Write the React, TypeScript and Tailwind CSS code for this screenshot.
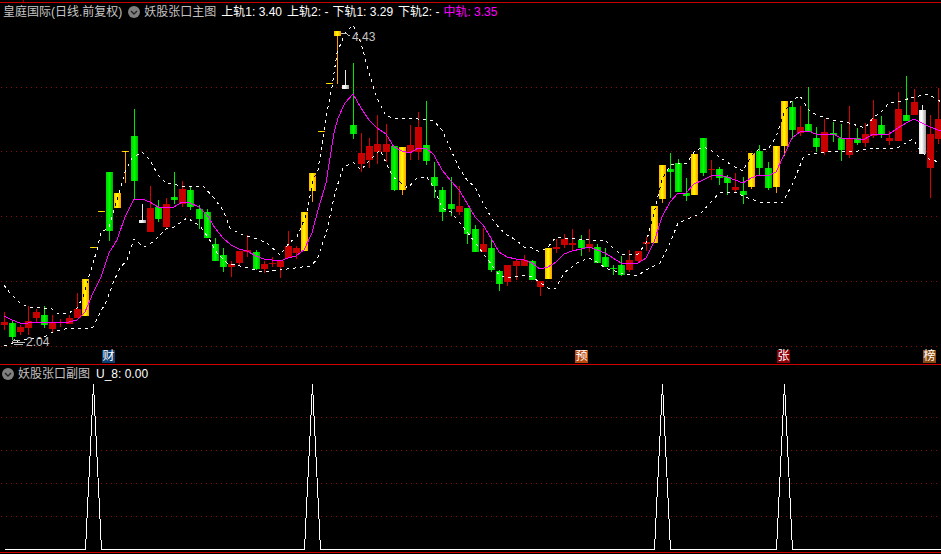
import React from "react";

type Kind = "g" | "r" | "y" | "w";
type Candle = [number, Kind, number, number, number, number];

const candles: Candle[] = [
  [4, "r", 312, 322, 325, 330], [12, "g", 320, 323, 337, 340], [20, "r", 325, 327, 332, 335], [28, "r", 306, 321, 328, 335],
  [36, "r", 309, 312, 318, 322], [44, "g", 306, 315, 325, 328], [52, "r", 315, 323, 329, 333], [60, "r", 319, 322, 323, 327],
  [69, "r", 315, 318, 324, 324], [77, "r", 293, 309, 318, 318], [85, "y", 279, 279, 316, 316], [93, "y", 247, 247, 248, 248],
  [101, "y", 211, 211, 212, 212], [109, "g", 172, 172, 231, 241], [117, "y", 193, 193, 208, 208], [125, "y", 151, 151, 152, 183],
  [134, "g", 109, 136, 181, 200], [142, "w", 204, 220, 223, 223], [150, "r", 186, 208, 232, 232], [158, "g", 200, 207, 219, 222],
  [166, "r", 198, 204, 227, 229], [174, "g", 172, 197, 200, 204], [182, "r", 181, 189, 204, 207], [190, "g", 186, 190, 207, 210],
  [199, "g", 205, 209, 219, 229], [207, "g", 209, 212, 238, 238], [215, "g", 238, 244, 261, 261], [223, "g", 248, 255, 267, 272],
  [231, "r", 261, 264, 267, 277], [239, "r", 251, 251, 263, 265], [247, "r", 235, 250, 252, 257], [256, "g", 250, 252, 269, 270],
  [264, "r", 261, 264, 269, 273], [272, "r", 257, 263, 264, 267], [280, "r", 260, 261, 267, 278], [288, "r", 231, 246, 258, 258],
  [296, "r", 246, 248, 253, 259], [304, "y", 212, 212, 251, 251], [312, "y", 173, 173, 191, 202], [321, "y", 131, 131, 132, 132],
  [329, "y", 83, 83, 84, 84], [337, "y", 31, 31, 36, 84], [345, "w", 70, 85, 89, 89], [353, "g", 63, 125, 134, 139],
  [361, "r", 133, 153, 164, 172], [369, "r", 138, 146, 160, 168], [377, "r", 115, 144, 152, 164], [386, "r", 124, 144, 152, 162],
  [394, "g", 146, 146, 190, 191], [402, "y", 147, 147, 190, 195], [410, "r", 125, 145, 152, 160], [418, "r", 112, 127, 152, 160],
  [426, "g", 101, 145, 161, 165], [434, "g", 162, 177, 186, 198], [442, "g", 187, 190, 212, 221], [451, "g", 177, 204, 209, 216],
  [459, "r", 186, 206, 212, 215], [467, "g", 208, 208, 234, 244], [475, "g", 225, 229, 252, 252], [483, "r", 228, 244, 252, 252],
  [491, "g", 239, 248, 270, 272], [499, "g", 270, 271, 284, 291], [507, "r", 265, 265, 282, 286], [516, "r", 260, 261, 266, 280],
  [524, "r", 255, 260, 266, 266], [532, "g", 260, 261, 280, 280], [540, "r", 281, 281, 287, 296], [548, "y", 248, 248, 279, 279],
  [556, "r", 239, 247, 249, 253], [564, "r", 234, 239, 245, 248], [572, "r", 229, 243, 245, 250], [581, "g", 235, 240, 248, 256],
  [589, "r", 229, 244, 248, 252], [597, "g", 244, 247, 263, 263], [605, "g", 248, 257, 267, 267], [613, "g", 265, 268, 269, 275],
  [621, "g", 256, 265, 275, 276], [629, "r", 250, 260, 270, 272], [638, "r", 251, 251, 261, 263], [646, "r", 237, 242, 244, 251],
  [654, "y", 206, 206, 243, 243], [662, "y", 165, 165, 199, 203], [670, "g", 153, 169, 172, 198], [678, "g", 159, 163, 192, 192],
  [686, "g", 178, 193, 196, 201], [694, "y", 154, 154, 195, 195], [703, "g", 138, 138, 173, 176], [711, "r", 160, 169, 170, 180],
  [719, "g", 167, 169, 178, 185], [727, "g", 175, 177, 183, 195], [735, "r", 173, 187, 190, 192], [743, "g", 177, 191, 195, 204],
  [751, "y", 153, 153, 187, 189], [759, "g", 145, 151, 168, 175], [768, "g", 162, 168, 188, 190], [776, "y", 146, 146, 187, 193],
  [784, "y", 101, 101, 146, 156], [792, "g", 101, 107, 130, 139], [800, "r", 106, 127, 133, 136], [808, "g", 87, 124, 132, 132],
  [816, "g", 127, 138, 147, 152], [824, "r", 119, 132, 152, 155], [833, "g", 122, 133, 135, 142], [841, "g", 124, 138, 150, 161],
  [849, "r", 106, 138, 155, 158], [857, "g", 128, 138, 143, 145], [865, "r", 123, 134, 143, 147], [873, "r", 100, 119, 136, 138],
  [881, "g", 116, 125, 134, 138], [889, "r", 131, 138, 141, 145], [898, "r", 92, 109, 141, 141], [906, "g", 76, 115, 121, 121],
  [914, "r", 89, 102, 115, 115], [922, "w", 105, 110, 154, 154], [930, "r", 115, 134, 168, 198], [938, "r", 88, 119, 139, 144],
];

const mid =
  "4,316 12,320 20,323 28,323 52,322 69,322 77,320 85,312 93,293 101,277 109,253 117,240 125,217 134,199 142,199 150,202 158,207 166,207 174,207 182,202 190,203 199,207 207,215 215,228 223,238 231,245 239,249 247,251 256,256 264,259 272,260 280,261 288,258 296,256 304,250 312,233 318,210 326,183 334,133 338,118 345,103 353,94 361,108 369,120 377,128 386,134 394,147 402,151 410,153 418,148 426,148 434,155 442,170 451,181 459,190 467,203 475,217 483,225 491,238 499,252 507,257 516,259 524,260 532,263 540,269 548,267 556,262 564,254 572,251 581,249 589,247 597,250 605,253 613,258 621,263 629,264 638,263 646,258 654,242 662,217 670,202 678,193 686,193 694,184 703,180 711,176 719,175 727,177 735,180 743,183 751,178 759,175 768,176 776,172 784,155 792,138 800,132 808,131 816,134 824,134 833,134 841,138 849,138 857,139 865,139 873,134 881,134 889,134 898,128 906,123 914,119 922,123 930,127 941,131";
const upper =
  "4,285 10,293 20,303 28,307 43,308 52,309 58,314 69,313 77,308 83,297 90,273 97,250 101,233 109,227 117,200 125,172 132,158 142,152 150,160 158,175 166,183 182,186 203,186 213,197 223,210 230,228 240,234 257,239 267,243 280,255 290,242 297,237 307,213 313,180 318,170 326,117 332,87 337,53 345,33 353,25 361,43 369,73 377,98 386,116 394,118 418,119 434,121 442,130 451,150 459,168 467,180 475,187 483,203 491,217 499,228 507,235 516,240 524,247 532,248 540,252 548,247 556,237 564,238 589,240 605,240 613,248 621,254 638,254 646,243 653,217 662,180 670,165 678,163 686,164 694,152 703,147 711,150 719,157 727,162 735,167 743,171 751,156 759,149 768,149 776,137 784,113 792,100 800,96 808,109 816,115 833,120 849,123 865,128 873,118 881,112 889,103 898,102 914,97 928,94 941,102";
const lower =
  "4,346 13,343 20,340 43,338 53,332 69,328 83,329 93,327 100,313 107,300 113,283 120,268 127,260 134,239 144,247 153,242 166,229 174,227 187,218 199,225 208,237 217,253 227,263 240,266 263,272 280,270 287,269 310,266 317,260 327,230 335,193 343,168 353,162 361,170 370,160 380,150 393,177 408,188 417,178 427,177 435,190 442,208 451,212 467,232 483,253 499,275 507,278 523,275 532,277 548,288 556,288 564,273 577,263 589,258 597,262 605,268 621,273 637,276 646,270 660,263 670,243 678,223 700,214 710,203 719,193 735,192 745,197 760,202 768,203 783,202 793,183 803,158 810,154 833,151 853,152 873,148 897,148 913,139 920,150 930,160 941,162";

const spikes = [93, 312, 662, 784];
const subLine = [
  "4,549",
  ...spikes.flatMap((x) => [`${x - 8},549`, `${x},384`, `${x + 8},549`]),
  "941,549",
].join(" ");

const fills: Record<Kind, string> = { g: "url(#gr)", r: "#c80000", y: "url(#ye)", w: "url(#wh)" };
const wicks: Record<Kind, string> = { g: "#00e800", r: "#d80000", y: "#ff9a00", w: "#e8e8e8" };

const badges = [
  { x: 102, t: "财", c: "#0f3f70" },
  { x: 575, t: "预", c: "#b84a10" },
  { x: 777, t: "张", c: "#8a0008" },
  { x: 923, t: "榜", c: "#8a4a10" },
];

function Toggle() {
  return (
    <svg width="12" height="12" viewBox="0 0 12 12" className="shrink-0">
      <circle cx="6" cy="6" r="6" fill="#808080" />
      <path d="M3 5l3 3 3-3" fill="none" stroke="#222" strokeWidth="1.4" />
    </svg>
  );
}

function Grid({ ys }: { ys: number[] }) {
  return (
    <>
      {ys.map((y) => (
        <line key={y} x1="1" x2="941" y1={y + 0.5} y2={y + 0.5} stroke="#8a0c0c" strokeDasharray="1 4" />
      ))}
    </>
  );
}

export default function App() {
  return (
    <div className="w-[941px] h-[554px] bg-black flex flex-col overflow-hidden text-[12px] leading-[14px] font-['Liberation_Sans','Noto_Sans_CJK_SC',sans-serif]">
      <div className="h-[2px] shrink-0 relative">
        <div className="absolute left-[23px] top-0 w-px h-[2px] bg-[#a00000]" />
      </div>
      <div className="h-px shrink-0 bg-[#c80000]" />

      <div className="relative h-[361px] shrink-0 flex flex-col">
        <div className="h-[18px] shrink-0 flex items-center pl-[3px] text-white whitespace-nowrap">
          <span className="text-[#c8c8c8]">皇庭国际(日线.前复权)</span>
          <span className="ml-[6px]"><Toggle /></span>
          <span className="ml-[4px] text-[#c0c0c0]">妖股张口主图</span>
          <div className="ml-[5px] flex">
            <span>上轨1: 3.40</span>
            <span className="ml-[5px]">上轨2: -</span>
            <span className="ml-[4px]">下轨1: 3.29</span>
            <span className="ml-[5px]">下轨2: -</span>
            <span className="ml-[4px] text-[#ff00ff]">中轨: 3.35</span>
          </div>
        </div>
        <svg width="941" height="343" viewBox="0 21 941 343" shapeRendering="crispEdges" className="block shrink-0">
          <defs>
            <linearGradient id="gr" x1="0" x2="1" y1="0" y2="0">
              <stop offset="0" stopColor="#00d000" />
              <stop offset="0.5" stopColor="#00ff00" />
              <stop offset="1" stopColor="#00b000" />
            </linearGradient>
            <linearGradient id="ye" x1="0" x2="1" y1="0" y2="0">
              <stop offset="0" stopColor="#ffb000" />
              <stop offset="0.45" stopColor="#ffff00" />
              <stop offset="1" stopColor="#ff9800" />
            </linearGradient>
            <linearGradient id="wh" x1="0" x2="1" y1="0" y2="0">
              <stop offset="0" stopColor="#e8e8e8" />
              <stop offset="0.4" stopColor="#ffffff" />
              <stop offset="1" stopColor="#a0a0a0" />
            </linearGradient>
            <clipPath id="yb">
              {candles.filter((c) => c[1] === "y" && c[4] - c[3] > 5).map((c) => (
                <rect key={c[0]} x={c[0] - 3} y={c[3]} width="7" height={c[4] - c[3]} />
              ))}
            </clipPath>
          </defs>
          <Grid ys={[87, 151, 216, 281, 346]} />
          {candles.map(([x, k, wt, bt, bb, wb]) => (
            <g key={x}>
              <rect x={x} y={wt} width="1" height={wb - wt} fill={wicks[k]} />
              <rect x={x - 3} y={bt} width="7" height={bb - bt} fill={fills[k]} />
            </g>
          ))}
          <polyline points={upper} fill="none" stroke="#fff" strokeDasharray="3 4" />
          <polyline points={lower} fill="none" stroke="#fff" strokeDasharray="3 4" />
          <g clipPath="url(#yb)">
            <polyline points={upper} fill="none" stroke="#000" strokeDasharray="3 4" />
            <polyline points={lower} fill="none" stroke="#000" strokeDasharray="3 4" />
          </g>
          <polyline points={mid} fill="none" stroke="#ff00ff" />
          <path d="M341 33h4l5 3" fill="none" stroke="#c0c0c0" />
          <path d="M12 342h13M14 340h6M14 344h9M12 342l3-3" fill="none" stroke="#c0c0c0" />
        </svg>
        <span className="absolute left-[352px] top-[27px] text-[#c4c4c4]">4.43</span>
        <span className="absolute left-[26px] top-[332px] text-[#c4c4c4]">2.04</span>
        {badges.map((b) => (
          <span
            key={b.x}
            className="absolute top-[347px] w-[13px] h-[13px] text-center text-white leading-[13px]"
            style={{ left: b.x, backgroundColor: b.c }}
          >
            {b.t}
          </span>
        ))}
      </div>

      <div className="h-px shrink-0 bg-[#d00000]" />

      <div className="h-[187px] shrink-0 flex flex-col">
        <div className="h-[17px] shrink-0 flex items-center pl-[2px] whitespace-nowrap">
          <Toggle />
          <span className="ml-[4px] text-[#c0c0c0]">妖股张口副图</span>
          <span className="ml-[6px] text-white">U_8: 0.00</span>
        </div>
        <svg width="941" height="170" viewBox="0 382 941 170" shapeRendering="crispEdges" className="block shrink-0">
          <Grid ys={[417, 450, 483, 516]} />
          <polyline points={subLine} fill="none" stroke="#fff" transform="translate(0.5 0.5)" />
        </svg>
      </div>

      <div className="h-px shrink-0 bg-[#d00000]" />
    </div>
  );
}
